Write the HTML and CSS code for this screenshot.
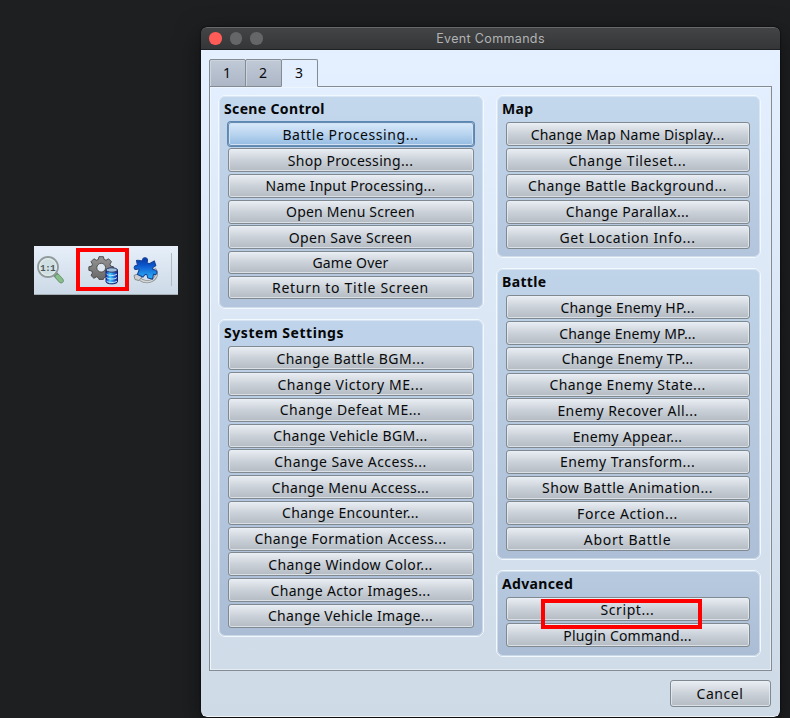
FILE: index.html
```html
<!DOCTYPE html>
<html lang="en">
<head>
<meta charset="utf-8">
<title>Event Commands</title>
<link rel="stylesheet" href="styles.css">
</head>
<body>
<div class="desktop">
  <div class="toolbar">
    <svg class="icons" width="144" height="48" viewBox="0 0 144 48">
      <defs>
        <linearGradient id="gear" x1="0" y1="0" x2="0" y2="1"><stop offset="0" stop-color="#969696"/><stop offset="1" stop-color="#686868"/></linearGradient>
        <linearGradient id="puz" x1="0" y1="0" x2="0" y2="1"><stop offset="0" stop-color="#0638a5"/><stop offset=".35" stop-color="#0c55cc"/><stop offset="1" stop-color="#2cb5fa"/></linearGradient>
        <linearGradient id="db" x1="0" y1="0" x2="1" y2="0"><stop offset="0" stop-color="#1029c8"/><stop offset=".35" stop-color="#42d0ff"/><stop offset="1" stop-color="#1018a0"/></linearGradient>
      </defs>
      <path d="M21.500 28.500l5.500 6" stroke="#6b8e72" stroke-width="5.500" stroke-linecap="round"/>
      <path d="M23.500 30.500l3.500 4" stroke="#84c087" stroke-width="4" stroke-linecap="round"/>
      <circle cx="14" cy="21" r="10" fill="#d0e0e2" stroke="#929b9c" stroke-width="1.800"/>
      <circle cx="14" cy="21" r="8.400" fill="none" stroke="#e7f1f1" stroke-width="1"/>
      <text x="13.700" y="24.500" class="ratio" text-anchor="middle">1:1</text>
      <g transform="translate(67.200 20.800) scale(.88)">
        <path fill="url(#gear)" stroke="#494949" stroke-width="1.100" d="M-2.500-11.500h5l.8 3.200 2.200.9 2.800-1.700 3.300 3.300-1.700 2.800.9 2.200 3.200.8v4l-3.200.8-.9 2.200 1.700 2.800-3.300 3.300-2.800-1.700-2.200.9-.8 2h-5l-.8-2-2.200-.9-2.800 1.700-3.300-3.300 1.700-2.800-.9-2.200-3.200-.8v-4l3.200-.8.9-2.200-1.700-2.800 3.300-3.300 2.800 1.700 2.200-.9z"/>
        <circle cy="1" r="5" fill="#dde7ef" stroke="#494949"/>
      </g>
      <path d="M72 24v11.500c0 3.200 11.500 3.200 11.500 0V24z" fill="url(#db)" stroke="#172266"/>
      <ellipse cx="77.750" cy="24" rx="5.750" ry="2.200" fill="#9fbdd8" stroke="#243464"/>
      <path d="M72.500 28c2 2 8.500 2 10.500 0M72.500 31.500c2 2 8.500 2 10.500 0M72.500 35c2 2 8.500 2 10.500 0" fill="none" stroke="#c9eeff" stroke-width="1"/>
      <path d="M105 32c3 4 10 5 14.500 1.500 4-3 3.500-8 1-11" fill="none" stroke="#8b9193" stroke-width="3"/>
      <path d="M105 32c3 4 10 5 14.500 1.500 4-3 3.500-8 1-11" fill="none" stroke="#d4d7d7" stroke-width="1.500"/>
      <path d="M100 29.500l4.500-2 3.500 3.500-3 3.500-4-1z" fill="#cccfcf" stroke="#858b8d"/>
      <path d="M108.500 14.500c0-3.500 4.500-3.800 5-.5.200 1.500-.8 2-.2 3l2 .8 5-2.800 1.500 4.500c-1 1.700-3 .8-3.300 2.800.3 2 3 1 4.300 3.200.8 2.500-1.700 3.800-3.300 2.800l-1 4.700-4.500-1c-1.300-1 .2-2.500-1.500-3.500-2-.7-2.200 1.500-3.500 2.500l-5.500-2.500 1.700-5c-1-1.500-3 .8-4.500-.5-1.500-2 .5-4.200 2.500-3.300.5-1-.5-3.500-.7-5.200 2-.8 4.500.8 6 0z" fill="url(#puz)" stroke="#17439a" stroke-width="1.100"/>
      <path d="M137.500 7v33" stroke="#b2b9c2"/>
    </svg>
    <div class="mark mark-tool"></div>
  </div>

  <div class="window">
    <div class="titlebar">
      <div class="lights"><i class="close"></i><i></i><i></i></div>
      <div class="title">Event Commands</div>
    </div>
    <div class="content">
      <div class="tabs"><div class="tab">1</div><div class="tab">2</div><div class="tab active">3</div></div>
      <div class="panel">
        <div class="column">
          <section class="group scene">
            <h2>Scene Control</h2>
            <div class="list">
              <button class="selected wide">Battle Processing...</button>
              <button>Shop Processing...</button>
              <button class="tight">Name Input Processing...</button>
              <button class="tight">Open Menu Screen</button>
              <button>Open Save Screen</button>
              <button class="short tight">Game Over</button>
              <button class="short widest">Return to Title Screen</button>
            </div>
          </section>
          <section class="group system">
            <h2>System Settings</h2>
            <div class="list">
              <button class="loose">Change Battle BGM...</button>
              <button class="wide">Change Victory ME...</button>
              <button class="loose">Change Defeat ME...</button>
              <button>Change Vehicle BGM...</button>
              <button class="loose">Change Save Access...</button>
              <button>Change Menu Access...</button>
              <button>Change Encounter...</button>
              <button class="loose">Change Formation Access...</button>
              <button class="loose">Change Window Color...</button>
              <button>Change Actor Images...</button>
              <button>Change Vehicle Image...</button>
            </div>
          </section>
        </div>
        <div class="column right">
          <section class="group map">
            <h2>Map</h2>
            <div class="list">
              <button class="tight">Change Map Name Display...</button>
              <button class="wide">Change Tileset...</button>
              <button class="loose">Change Battle Background...</button>
              <button>Change Parallax...</button>
              <button class="wide">Get Location Info...</button>
            </div>
          </section>
          <section class="group battle">
            <h2>Battle</h2>
            <div class="list">
              <button class="tight">Change Enemy HP...</button>
              <button class="tight">Change Enemy MP...</button>
              <button class="tight">Change Enemy TP...</button>
              <button class="loose">Change Enemy State...</button>
              <button class="loose">Enemy Recover All...</button>
              <button>Enemy Appear...</button>
              <button class="loose">Enemy Transform...</button>
              <button class="loose">Show Battle Animation...</button>
              <button class="wide">Force Action...</button>
              <button class="widest">Abort Battle</button>
            </div>
          </section>
          <section class="group advanced">
            <h2>Advanced</h2>
            <div class="list">
              <button class="wide">Script...</button>
              <button class="tight">Plugin Command...</button>
            </div>
            <div class="mark mark-script"></div>
          </section>
        </div>
      </div>
      <div class="footer"><button class="cancel wide">Cancel</button></div>
    </div>
  </div>
</div>
</body>
</html>
```
FILE: styles.css
```css
* { box-sizing: border-box; }
body { margin: 0; font-family: "Noto Sans", sans-serif; font-size: 14px; color: #080a0c; background: #1e1f21; }
.desktop { width: 790px; height: 718px; overflow: hidden; display: flex; align-items: flex-start; background: #1e1f21; }

.toolbar { position: relative; width: 144px; height: 49px; margin: 246px 23px 0 34px; flex: none; background: linear-gradient(#e6effa, #ccd9e6); border-bottom: 1px solid #a5adb5; }
.icons { display: block; }
.ratio { font: bold 9px "Liberation Mono", monospace; fill: #4b5558; letter-spacing: -0.5px; }
.mark { position: absolute; border: 4px solid #f00; }
.mark-tool { left: 42px; top: 2px; width: 53px; height: 43px; }
.mark-script { left: 44px; top: 28px; width: 161px; height: 30px; }

.window { width: 579px; height: 690px; margin-top: 27px; flex: none; border-radius: 6px; overflow: hidden; box-shadow: 0 0 2px #000, 0 8px 26px rgba(0, 0, 0, .5); }
.titlebar { position: relative; height: 23px; background: linear-gradient(#434446, #353637); border-top: 1px solid #68696a; border-bottom: 1px solid #202122; border-radius: 6px 6px 0 0; display: flex; align-items: center; }
.lights { display: flex; gap: 8px; padding-left: 8px; width: 70px; }
.lights i { width: 12.500px; height: 12.500px; flex: none; border-radius: 50%; background: #656668; }
.lights .close { background: #ff5c57; }
.title { flex: 1; padding: 1px 70px 0 0; text-align: center; font: 12.500px/20px Inter, sans-serif; color: #b2b3b4; letter-spacing: .35px; }
.content { height: 667px; padding: 9px 8px 0; background: linear-gradient(#e4f0ff, #cedae6); border-bottom: 1px solid #eef3f8; border-radius: 0 0 6px 6px; }

.tabs { display: flex; height: 28px; position: relative; z-index: 1; }
.tab { width: 37px; height: 28px; margin-right: -1px; padding-right: 1px; border: 1px solid #858b93; border-radius: 2px 2px 0 0; background: linear-gradient(#c0cad7, #adb6c5); text-align: center; line-height: 26px; box-shadow: inset 1px 1px #ccd5df; }
.tab.active { background: #e3efff; border-bottom-color: #e3efff; box-shadow: none; }
.panel { height: 585px; margin-top: -1px; border: 1px solid #858b93; padding: 8px; display: flex; gap: 12px; box-shadow: inset 1px 1px #edf5ff, inset -1px -1px #e4edf6; }
.column { width: 266px; flex: none; display: flex; flex-direction: column; gap: 10.500px; }
.column.right { width: 265px; }
.group { position: relative; border: 1px solid #f2f8ff; box-shadow: inset 0 0 0 1px rgba(242, 248, 255, .45); border-radius: 7px; padding: 4px 9px 0 5px; }
.scene, .map { background: linear-gradient(#c4d8ed, #b3c5dc); }
.system { background: linear-gradient(#bfd3ea, #abbdd4); }
.battle { background: linear-gradient(#c0d4e9, #adbfd6); }
.advanced { background: linear-gradient(#b8cae0, #abbdd4); }
.scene { height: 213.500px; }
.system { height: 318px; }
.map { height: 162.500px; }
.battle { height: 291.500px; }
.advanced { height: 87px; }
h2 { margin: 0; height: 22.400px; font-size: 14px; line-height: 18px; font-weight: 700; letter-spacing: .35px; color: #050607; }
.system h2 { letter-spacing: .55px; }
.list { padding-left: 4px; display: flex; flex-direction: column; gap: 1.750px; }
button { display: block; width: 246px; height: 24px; margin: 0; padding: 0 1px 0 0; border: 1px solid #808890; border-radius: 3px; background: linear-gradient(#e9eef4, #cbd1d8 50%, #b5bbc2); box-shadow: inset 0 0 0 1px rgba(233, 239, 245, .7); color: #080a0c; font: 14px/21px "Noto Sans", sans-serif; letter-spacing: .32px; text-align: center; }
.right button { width: 244px; }
.tight { letter-spacing: .2px; }
.loose { letter-spacing: .43px; }
.wide { letter-spacing: .57px; }
.widest { letter-spacing: .7px; }
.short { height: 23.300px; }
.selected { border-color: #698cb0; background: linear-gradient(#d9e9fa, #b9d4ef 50%, #94bce2); box-shadow: 0 0 0 1px #5b87b4, inset 0 0 0 1px #cfe2f5; }
.footer { display: flex; justify-content: flex-end; padding: 9px 1px 0 0; }
button.cancel { width: 101px; height: 27px; line-height: 24px; }
```
